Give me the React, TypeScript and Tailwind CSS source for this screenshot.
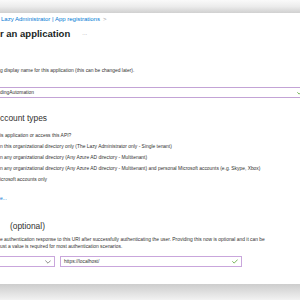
function Check() {
  return (
    <svg width="6" height="5" viewBox="0 0 6 5" fill="none">
      <path d="M0.6 2.6L2.2 4.1L5.4 0.8" stroke="#6bb04a" strokeWidth="0.9" strokeLinecap="round" strokeLinejoin="round" />
    </svg>
  );
}

function Chevron() {
  return (
    <svg width="6" height="4" viewBox="0 0 6 4" fill="none">
      <path d="M0.6 0.8L3 3.2L5.4 0.8" stroke="#605e5c" strokeWidth="0.7" strokeLinecap="round" strokeLinejoin="round" />
    </svg>
  );
}

export default function App() {
  const radios = [
    'n this organizational directory only (The Lazy Administrator only - Single tenant)',
    'n any organizational directory (Any Azure AD directory - Multitenant)',
    'n any organizational directory (Any Azure AD directory - Multitenant) and personal Microsoft accounts (e.g. Skype, Xbox)',
    'icrosoft accounts only',
  ];

  return (
    <div className="w-[300px] h-[300px] overflow-hidden bg-white flex flex-col text-[#323130] font-['Liberation_Sans',Arial,sans-serif]">
      {/* Top window shadow */}
      <div className="h-[13px] shrink-0 bg-linear-to-b from-[#fafafa] via-[#ececec] to-[#d0d0d0]" />

      <div className="flex-1 flex flex-col whitespace-nowrap">
        {/* Breadcrumb */}
        <div className="mt-[2px] h-[8px] leading-[8px] text-[6px] text-[#0078d4] pl-px">
          Lazy Administrator | App registrations
          <span className="ml-[3px] text-[#a19f9d]">&gt;</span>
        </div>

        {/* Title */}
        <div className="mt-[5px] h-[12px] flex items-center gap-[12px]">
          <span className="text-[9.5px] leading-[12px] font-bold text-[#201f1e]">r an application</span>
          <span className="text-[5px] leading-[12px] text-[#8a8886]">···</span>
        </div>

        <div className="mt-[27px] h-[7px] leading-[7px] text-[4.9px]">
          g display name for this application (this can be changed later).
        </div>

        {/* Name input */}
        <div className="mt-[13px] h-[11px] w-[310px] border-y border-[#c3a3d6] flex items-center justify-between pr-[7px]">
          <span className="text-[4.9px] leading-[7px]">dingAutomation</span>
          <Check />
        </div>

        {/* Supported account types */}
        <div className="mt-[15px] h-[10px] leading-[10px] text-[8.4px]">ccount types</div>
        <div className="mt-[9px] h-[7px] leading-[7px] text-[4.9px]">is application or access this API?</div>
        <div className="mt-[2px] flex flex-col">
          {radios.map(r => (
            <div key={r} className="h-[11px] leading-[11px] text-[4.9px]">
              {r}
            </div>
          ))}
        </div>
        <div className="mt-[10px] h-[7px] leading-[7px] text-[4.9px] text-[#0078d4]">e...</div>

        {/* Redirect URI */}
        <div className="mt-[19px] h-[10px] leading-[10px] text-[8.4px] pl-[10px]">(optional)</div>
        <div className="mt-[5px] leading-[7px] text-[4.9px]">
          <div>
            e authentication response to this URI after successfully authenticating the user. Providing this now is optional and it can be
          </div>
          <div>ust a value is required for most authentication scenarios.</div>
        </div>

        <div className="mt-[6px] flex gap-[5px]">
          <div className="w-[55px] h-[11px] border-y border-r border-[#c9a6dc] flex items-center justify-end pr-[3px]">
            <Chevron />
          </div>
          <div className="w-[182px] h-[11px] border border-[#c9a6dc] flex items-center justify-between px-[3px]">
            <span className="text-[4.9px] leading-[7px]">https://localhost/</span>
            <Check />
          </div>
        </div>
      </div>

      {/* Bottom window shadow */}
      <div className="h-[16px] shrink-0 bg-linear-to-b from-[#cdcdcd] to-[#f2f2f2]" />
    </div>
  );
}
